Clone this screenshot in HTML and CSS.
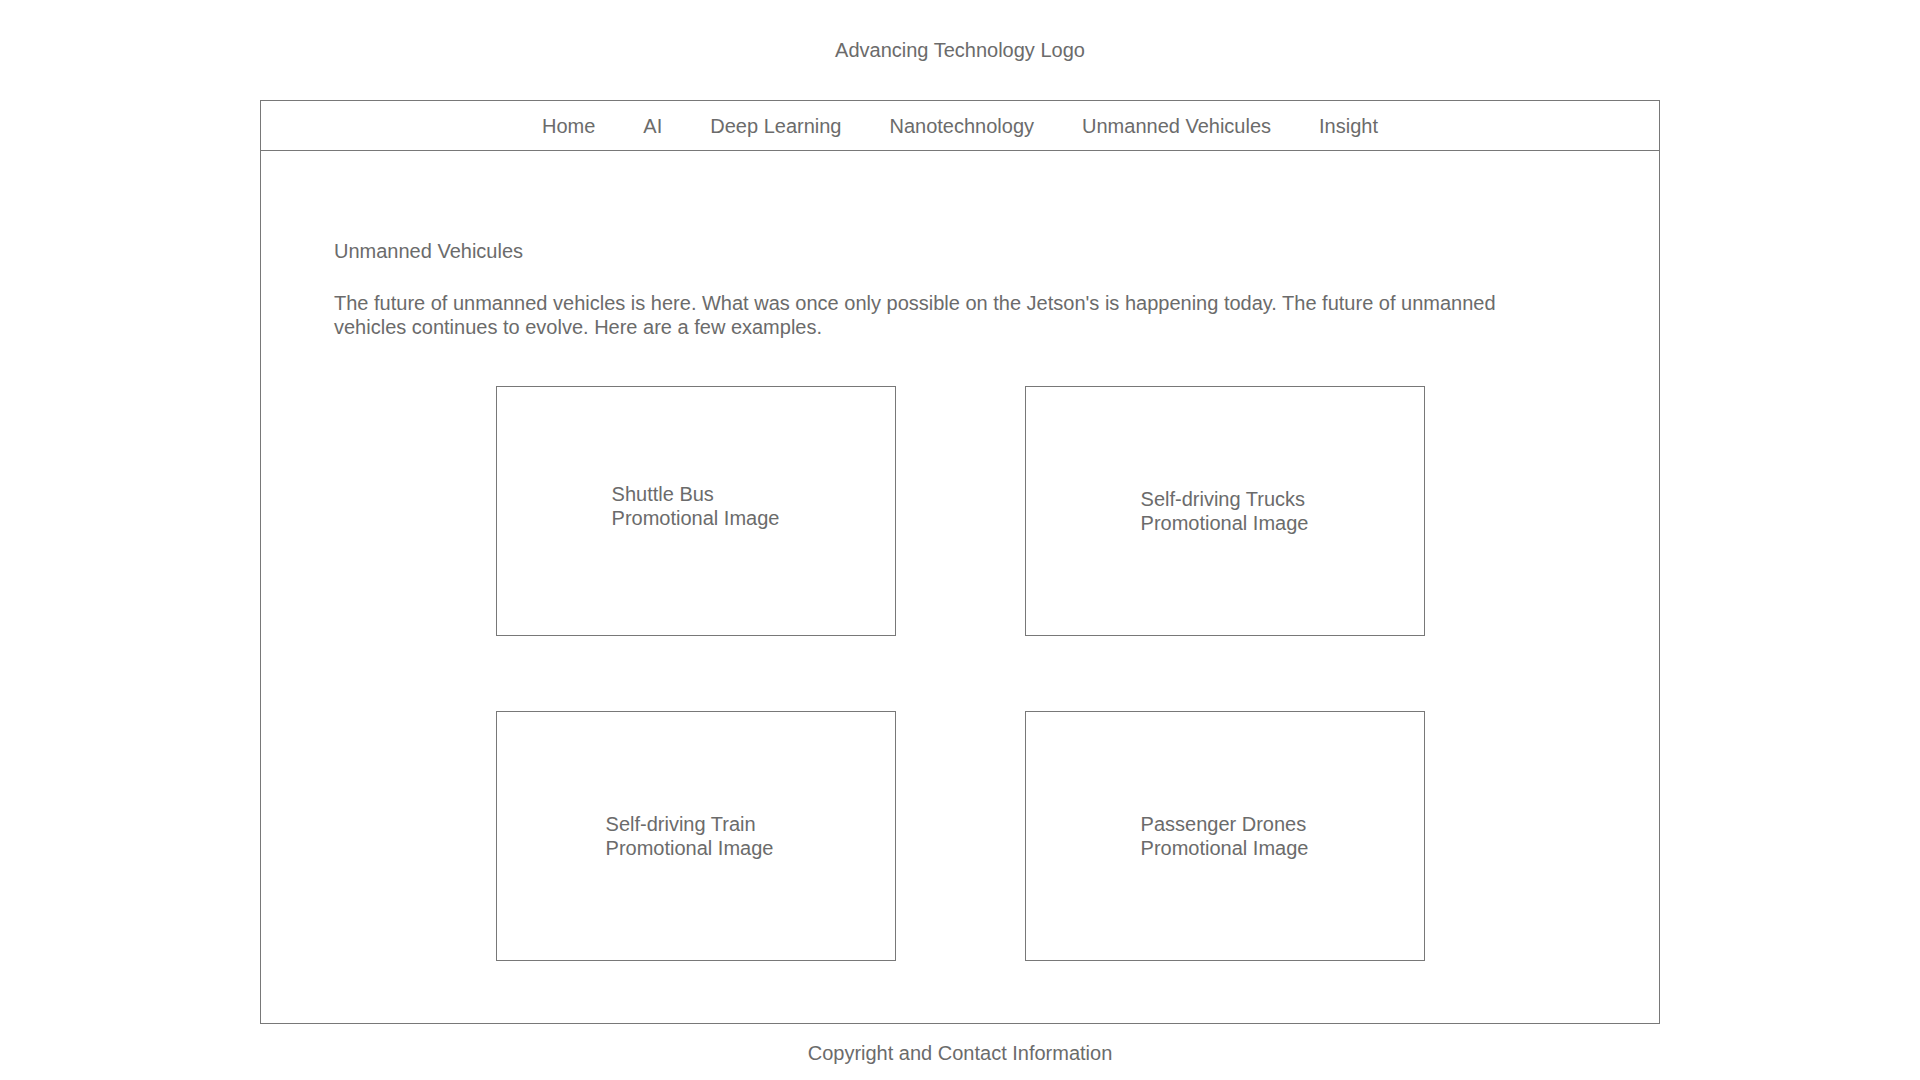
FILE: index.html
```html
<!DOCTYPE html>
<html lang="en">
<head>
<meta charset="utf-8">
<title>Unmanned Vehicules</title>
<link rel="stylesheet" href="styles.css">
</head>
<body>
<header class="logo">Advancing Technology Logo</header>
<div class="frame">
  <nav class="nav">
    <a class="nav-item">Home</a>
    <a class="nav-item">AI</a>
    <a class="nav-item">Deep Learning</a>
    <a class="nav-item">Nanotechnology</a>
    <a class="nav-item">Unmanned Vehicules</a>
    <a class="nav-item">Insight</a>
  </nav>
  <main class="content">
    <h1 class="title">Unmanned Vehicules</h1>
    <p class="intro">The future of unmanned vehicles is here. What was once only possible on the Jetson's is happening today. The future of unmanned vehicles continues to evolve. Here are a few examples.</p>
    <div class="grid">
      <div class="card card-up"><div class="card-text">Shuttle Bus<br>Promotional Image</div></div>
      <div class="card"><div class="card-text">Self-driving Trucks<br>Promotional Image</div></div>
      <div class="card card-left"><div class="card-text">Self-driving Train<br>Promotional Image</div></div>
      <div class="card"><div class="card-text">Passenger Drones<br>Promotional Image</div></div>
    </div>
  </main>
</div>
<footer class="footer">Copyright and Contact Information</footer>
</body>
</html>
```
FILE: styles.css
```css
* { box-sizing: border-box; }
html, body { background: #ffffff; }
body {
  margin: 0;
  font-family: "Liberation Sans", Arial, Helvetica, sans-serif;
  font-size: 20px;
  line-height: 24px;
  color: #6b6b6b;
}
.logo {
  height: 100px;
  display: flex;
  align-items: center;
  justify-content: center;
}
.frame {
  width: 1400px;
  margin: 0 auto;
  border: 1px solid #787878;
}
.nav {
  height: 50px;
  border-bottom: 1px solid #787878;
  display: flex;
  align-items: center;
  justify-content: center;
  gap: 48px;
}
.nav-item { color: #6b6b6b; text-decoration: none; }
.content {
  padding: 88px 73px 62px;
}
.title {
  margin: 0;
  font-size: 20px;
  font-weight: normal;
  line-height: 24px;
}
.intro {
  margin: 28px 0 0;
  max-width: 1200px;
  line-height: 24px;
}
.grid {
  margin-top: 47px;
  display: grid;
  grid-template-columns: 400px 400px;
  grid-auto-rows: 250px;
  column-gap: 129px;
  row-gap: 75px;
  justify-content: center;
}
.card {
  border: 1px solid #787878;
  display: flex;
  align-items: center;
  justify-content: center;
}
.card-up { padding-bottom: 10px; }
.card-left { padding-right: 12px; }
.footer {
  margin-top: 17px;
  text-align: center;
}
```
